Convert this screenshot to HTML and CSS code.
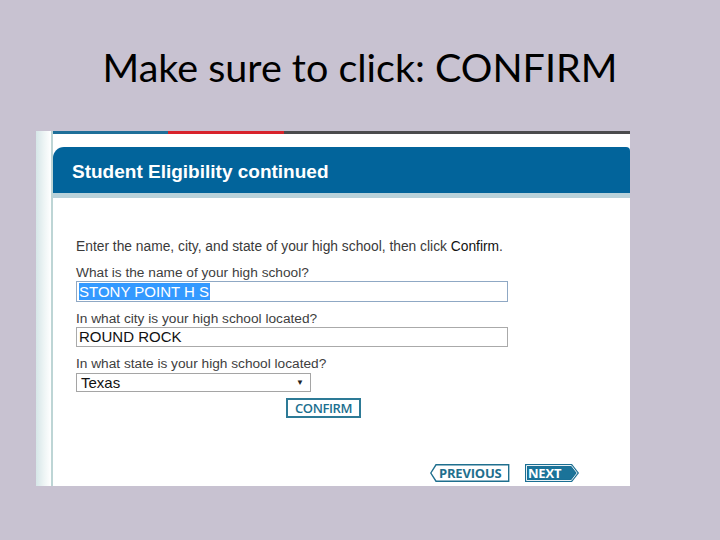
FILE: index.html
```html
<!DOCTYPE html>
<html>
<head>
<meta charset="utf-8">
<link rel="stylesheet" href="styles.css">
</head>
<body>
<div class="slide">
  <h1 class="slide-title">Make sure to click: CONFIRM</h1>
  <div class="shot">
    <div class="strip"></div>
    <div class="main">
      <div class="topline"><span class="seg seg-blue"></span><span class="seg seg-red"></span><span class="seg seg-gray"></span></div>
      <div class="header">Student Eligibility continued</div>
      <div class="band"></div>
      <div class="content">
        <p class="intro">Enter the name, city, and state of your high school, then click <span class="em">Confirm</span>.</p>
        <div class="label">What is the name of your high school?</div>
        <div class="field field-focus"><span class="sel">STONY POINT H S</span></div>
        <div class="label label-city">In what city is your high school located?</div>
        <div class="field">ROUND ROCK</div>
        <div class="label label-state">In what state is your high school located?</div>
        <div class="select"><span>Texas</span><span class="caret">&#9660;</span></div>
        <div class="confirm-row"><span class="confirm">CONFIRM</span></div>
        <div class="nav">
          <span class="navbtn prev">
            <svg class="shape" width="80" height="18" viewBox="0 0 80 18"><polygon points="0.8,9 6,0.8 78.7,0.8 78.7,17.2 6,17.2" fill="#fff" stroke="#1f6f8e" stroke-width="1.4"/></svg>
            <span class="navtext">PREVIOUS</span>
          </span>
          <span class="navbtn next">
            <svg class="shape" width="54" height="18" viewBox="0 0 54 18"><polygon points="0,0 47,0 54,9 47,18 0,18" fill="#1b6f93"/><polygon points="1.5,1.5 46.3,1.5 52.1,9 46.3,16.5 1.5,16.5" fill="none" stroke="#fff" stroke-width="0.9"/><polygon points="2.6,2.6 45.7,2.6 50.8,9 45.7,15.4 2.6,15.4" fill="#1b7399"/></svg>
            <span class="navtext">NEXT</span>
          </span>
        </div>
      </div>
    </div>
  </div>
</div>
</body>
</html>
```
FILE: styles.css
```css
html, body {
  margin: 0;
  padding: 0;
}
body {
  background: #c8c2d1;
  width: 720px;
  height: 540px;
  overflow: hidden;
}
.slide {
  display: flex;
  flex-direction: column;
}
.slide-title {
  margin: 0;
  height: 131px;
  box-sizing: border-box;
  padding-top: 46px;
  font-family: Lato, "Open Sans", sans-serif;
  font-weight: normal;
  font-size: 39.5px;
  line-height: 42px;
  text-align: center;
  color: #000;
}
.shot {
  display: flex;
  margin-left: 36px;
  width: 594px;
  height: 355px;
}
.strip {
  width: 15px;
  background: linear-gradient(to right, #d6e6e8, #eef5f5 55%, #ffffff);
  border-right: 2px solid #bdd5d5;
}
.main {
  flex: 1;
  background: #fff;
  display: flex;
  flex-direction: column;
}
.topline {
  display: flex;
  height: 3px;
}
.seg { display: block; height: 3px; }
.seg-blue { width: 115px; background: #1f6f99; }
.seg-red { width: 116px; background: #d8232b; }
.seg-gray { flex: 1; background: #4b4b4d; }
.header {
  margin-top: 13px;
  height: 46px;
  box-sizing: border-box;
  background: #02649b;
  border-radius: 11px 4px 0 0;
  color: #fff;
  font-family: "Liberation Sans", Arial, sans-serif;
  font-weight: bold;
  font-size: 19px;
  line-height: 22px;
  padding: 14px 0 0 19px;
}
.band {
  height: 5px;
  background: #b9d2da;
}
.content {
  padding: 41px 0 0 23px;
  font-family: "Liberation Sans", Arial, sans-serif;
  color: #333;
  display: flex;
  flex-direction: column;
  align-items: flex-start;
}
.intro {
  margin: 0;
  font-size: 13.8px;
  line-height: 16px;
  color: #3a3a3a;
}
.intro .em { color: #111; }
.label {
  margin-top: 10px;
  font-size: 13.7px;
  line-height: 16px;
  color: #404040;
}
.label-city { margin-top: 9px; }
.label-state { margin-top: 9px; }
.field {
  width: 432px;
  height: 20px;
  box-sizing: border-box;
  border: 1px solid #aaaaaa;
  font-size: 15px;
  line-height: 18px;
  color: #111;
  padding-left: 2px;
}
.field-focus {
  height: 21px;
  border-color: #8fa8c4;
  padding-top: 1px;
  line-height: 17px;
}
.sel {
  background: #3399ff;
  color: #fff;
  display: inline-block;
  padding-right: 1px;
}
.select {
  margin-top: 1px;
  width: 235px;
  height: 19px;
  box-sizing: border-box;
  border: 1px solid #a5a5a5;
  font-size: 15px;
  line-height: 17px;
  color: #111;
  padding: 0 6px 0 4px;
  display: flex;
  justify-content: space-between;
  align-items: center;
}
.caret {
  font-size: 8px;
  line-height: 8px;
  color: #222;
}
.confirm-row {
  margin-top: 6px;
  padding-left: 210px;
}
.confirm {
  display: block;
  width: 75px;
  height: 20px;
  box-sizing: border-box;
  border: 2px solid #2d7a96;
  font-family: "Open Sans", sans-serif;
  font-weight: 600;
  font-size: 13px;
  line-height: 16px;
  text-align: center;
  color: #1c6f8f;
  letter-spacing: -0.4px;
}
.nav {
  margin-top: 46px;
  align-self: stretch;
  display: flex;
  justify-content: flex-end;
  padding-right: 51px;
  gap: 15px;
}
.navbtn {
  position: relative;
  display: flex;
  align-items: center;
  height: 18px;
  font-family: "Open Sans", sans-serif;
  font-weight: bold;
  font-size: 13px;
  letter-spacing: -0.2px;
}
.shape {
  position: absolute;
  left: 0;
  top: 0;
}
.navtext {
  position: relative;
  line-height: 18px;
}
.prev {
  width: 80px;
  color: #1f6f8e;
  padding-left: 9px;
  box-sizing: border-box;
}
.next {
  width: 54px;
  color: #fff;
  padding-left: 3px;
  box-sizing: border-box;
}
```
